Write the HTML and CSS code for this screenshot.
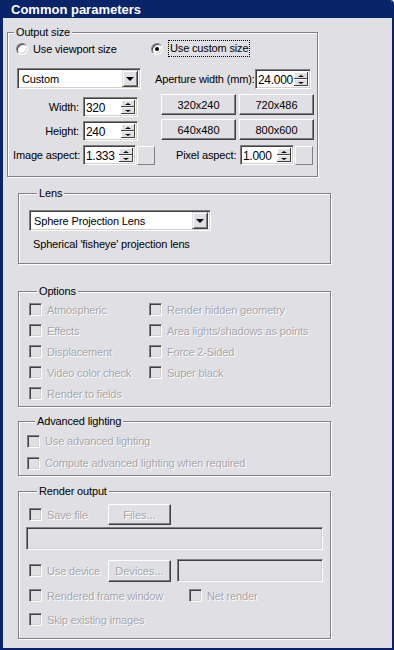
FILE: index.html
```html
<!DOCTYPE html>
<html lang="en">
<head>
    <meta charset="UTF-8">
    <title>Common parameters</title>
    <link rel="stylesheet" href="styles.css">
</head>
<body>
    <div class="window">
        <div class="titlebar">Common parameters</div>
        <div class="panel">

            <!-- Output size -->
            <fieldset class="group group-output">
                <legend>Output size</legend>
                <div class="radio-row">
                    <label class="radio"><span class="radio-dot"></span>Use viewport size</label>
                    <label class="radio"><span class="radio-dot is-on"></span><span class="focus">Use custom size</span></label>
                </div>
                <div class="out-body">
                    <div class="out-left">
                        <div class="combo combo-size">
                            <span class="combo-text">Custom</span>
                            <span class="combo-btn"></span>
                        </div>
                        <div class="spin-row">
                            <span class="spin-label">Width:</span>
                            <div class="spin"><span class="spin-value">320</span><span class="spin-arrows"><i class="up"></i><i class="down"></i></span></div>
                        </div>
                        <div class="spin-row">
                            <span class="spin-label">Height:</span>
                            <div class="spin"><span class="spin-value">240</span><span class="spin-arrows"><i class="up"></i><i class="down"></i></span></div>
                        </div>
                        <div class="spin-row">
                            <span class="spin-label">Image aspect:</span>
                            <div class="spin"><span class="spin-value">1.333</span><span class="spin-arrows"><i class="up"></i><i class="down"></i></span></div>
                            <span class="swatch"></span>
                        </div>
                    </div>
                    <div class="out-right">
                        <div class="aperture-row">
                            <span class="aperture-label">Aperture width (mm):</span>
                            <div class="spin spin-aperture"><span class="spin-value">24.000</span><span class="spin-arrows"><i class="up"></i><i class="down"></i></span></div>
                        </div>
                        <div class="preset-grid">
                            <button class="btn">320x240</button>
                            <button class="btn">720x486</button>
                            <button class="btn">640x480</button>
                            <button class="btn">800x600</button>
                        </div>
                        <div class="pixel-row">
                            <span class="pixel-label">Pixel aspect:</span>
                            <div class="spin spin-pixel"><span class="spin-value">1.000</span><span class="spin-arrows"><i class="up"></i><i class="down"></i></span></div>
                            <span class="swatch"></span>
                        </div>
                    </div>
                </div>
            </fieldset>

            <!-- Lens -->
            <fieldset class="group group-lens">
                <legend>Lens</legend>
                <div class="combo combo-lens">
                    <span class="combo-text">Sphere Projection Lens</span>
                    <span class="combo-btn"></span>
                </div>
                <p class="lens-desc">Spherical 'fisheye' projection lens</p>
            </fieldset>

            <!-- Options -->
            <fieldset class="group group-options">
                <legend>Options</legend>
                <div class="options-grid">
                    <label class="check"><span class="box"></span>Atmospheric</label>
                    <label class="check"><span class="box"></span>Render hidden geometry</label>
                    <label class="check"><span class="box"></span>Effects</label>
                    <label class="check"><span class="box"></span>Area lights/shadows as points</label>
                    <label class="check"><span class="box"></span>Displacement</label>
                    <label class="check"><span class="box"></span>Force 2-Sided</label>
                    <label class="check"><span class="box"></span>Video color check</label>
                    <label class="check"><span class="box"></span>Super black</label>
                    <label class="check"><span class="box"></span>Render to fields</label>
                </div>
            </fieldset>

            <!-- Advanced lighting -->
            <fieldset class="group group-lighting">
                <legend>Advanced lighting</legend>
                <label class="check"><span class="box"></span>Use advanced lighting</label>
                <label class="check"><span class="box"></span>Compute advanced lighting when required</label>
            </fieldset>

            <!-- Render output -->
            <fieldset class="group group-render">
                <legend>Render output</legend>
                <div class="render-row">
                    <label class="check check-fixed"><span class="box"></span>Save file</label>
                    <button class="btn btn-small is-disabled">Files...</button>
                </div>
                <div class="field field-path"></div>
                <div class="render-row render-row-device">
                    <label class="check check-fixed"><span class="box"></span>Use device</label>
                    <button class="btn btn-small btn-device is-disabled">Devices...</button>
                    <div class="field field-device"></div>
                </div>
                <div class="render-row render-row-frame">
                    <label class="check check-frame"><span class="box"></span>Rendered frame window</label>
                    <label class="check"><span class="box"></span>Net render</label>
                </div>
                <div class="render-row render-row-skip">
                    <label class="check"><span class="box"></span>Skip existing images</label>
                </div>
            </fieldset>

        </div>
    </div>
</body>
</html>
```

FILE: styles.css
```css
body {
    margin: 0;
    background: #fff;
    font-family: "Liberation Sans", Arial, sans-serif;
    font-size: 11px;
    letter-spacing: -0.15px;
    color: #000;
}
.window {
    box-sizing: border-box;
    width: 394px;
    height: 650px;
    background: #e0dfe3;
    border-left: 3px solid #0a246a;
    border-right: 2px solid #0a246a;
    border-bottom: 2px solid #0a246a;
    border-top-right-radius: 4px;
    overflow: hidden;
}
.titlebar {
    height: 18px;
    line-height: 19px;
    padding-left: 8px;
    background: #0a246a;
    color: #fff;
    font-weight: bold;
    font-size: 13px;
    letter-spacing: 0;
}
.panel {
    padding-top: 8px;
}

/* group boxes, etched look */
.group {
    box-sizing: border-box;
    margin: 0;
    padding: 0;
    border: 1px solid #808080;
    box-shadow: inset 1px 1px 0 #fff, 1px 1px 0 #fff;
    min-inline-size: 0;
}
.group legend {
    margin-left: 8px;
    padding: 0 2px;
    line-height: 13px;
    background: #e0dfe3;
}
.group-output {
    width: 311px;
    margin-left: 4px;
    padding-bottom: 11px;
}
.group-output legend { margin-left: 6px; }
.group-lens,
.group-options,
.group-lighting,
.group-render {
    width: 313px;
    margin-left: 15px;
}
.group-lens { margin-top: 10px; padding: 10px 0 12px 10px; }
.group-options { margin-top: 21px; padding: 1px 0 2px 10px; }
.group-lighting { margin-top: 8px; padding: 2px 0 1px 8px; }
.group-render { margin-top: 9px; padding: 6px 0 8px 10px; }

.is-disabled,
.check {
    color: #a7a6aa;
    text-shadow: 1px 1px 0 #fff;
}

/* radios */
.radio-row {
    display: grid;
    grid-template-columns: 135px auto;
    margin-top: 1px;
    padding-left: 8px;
    height: 17px;
}
.radio {
    display: flex;
    align-items: center;
    gap: 5px;
    white-space: nowrap;
}
.radio-dot {
    box-sizing: border-box;
    position: relative;
    width: 12px;
    height: 12px;
    border-radius: 50%;
    background: #fff;
    border: 1px solid;
    border-color: #808080 #fff #fff #808080;
    box-shadow: inset 1px 1px 0 #404040, inset -1px -1px 0 #d4d0c8;
}
.radio-dot.is-on::after {
    content: "";
    position: absolute;
    left: 3px;
    top: 3px;
    width: 4px;
    height: 4px;
    border-radius: 50%;
    background: #000;
}
.focus {
    border: 1px dotted #000;
    padding: 1px 1px 2px 1px;
}

/* output size body */
.out-body {
    display: flex;
    margin-top: 11px;
    padding-left: 5px;
}
.out-left {
    width: 142px;
}
.out-right {
    flex: 1;
}

/* sunken field */
.combo,
.spin,
.field {
    box-sizing: border-box;
    border: 1px solid;
    border-color: #808080 #fff #fff #808080;
    box-shadow: inset 1px 1px 0 #404040, inset -1px -1px 0 #d4d0c8;
}
.combo {
    display: flex;
    align-items: center;
    height: 21px;
    background: #fff;
    padding: 2px;
}
.combo-text {
    flex: 1;
    padding-left: 2px;
    white-space: nowrap;
}
.combo-btn {
    box-sizing: border-box;
    position: relative;
    width: 16px;
    height: 17px;
    background: #e0dfe3;
    border: 1px solid;
    border-color: #e0dfe3 #404040 #404040 #e0dfe3;
    box-shadow: inset 1px 1px 0 #fff, inset -1px -1px 0 #808080;
}
.combo-btn::after {
    content: "";
    position: absolute;
    left: 3px;
    top: 6px;
    border-left: 4px solid transparent;
    border-right: 4px solid transparent;
    border-top: 4px solid #000;
}
.combo-size {
    width: 124px;
    margin-left: 4px;
}
.combo-lens {
    width: 182px;
}
.lens-desc {
    margin: 7px 0 0 4px;
    line-height: 13px;
}

/* spinners */
.spin-row {
    display: flex;
    align-items: center;
    height: 20px;
    margin-top: 4px;
    white-space: nowrap;
}
.spin-row:nth-child(2) {
    margin-top: 8px;
}
.spin-label {
    width: 66px;
    margin-right: 4px;
    text-align: right;
}
.spin {
    display: flex;
    width: 55px;
    height: 20px;
    padding: 2px 2px 2px 1px;
    background: #fff;
}
.spin-value {
    flex: 1;
    font-size: 12px;
    letter-spacing: -0.3px;
    line-height: 16px;
    padding-left: 1px;
    overflow: hidden;
}
.spin-arrows {
    display: flex;
    flex-direction: column;
    width: 14px;
}
.spin-arrows i {
    box-sizing: border-box;
    position: relative;
    flex: 1;
    background: #e0dfe3;
    border-right: 1px solid #404040;
    border-bottom: 1px solid #404040;
    box-shadow: inset 1px 1px 0 #fff;
}
.spin-arrows i::after {
    content: "";
    position: absolute;
    left: 4px;
    top: 3px;
    border-left: 3px solid transparent;
    border-right: 3px solid transparent;
}
.spin-arrows .up::after { border-bottom: 2px solid #000; }
.spin-arrows .down::after { border-top: 2px solid #000; }
.swatch {
    box-sizing: border-box;
    width: 18px;
    height: 19px;
    margin-left: 1px;
    border: 1px solid;
    border-color: #fff #808080 #808080 #fff;
}

.aperture-row {
    display: flex;
    align-items: center;
    height: 21px;
    white-space: nowrap;
}
.aperture-label {
    width: 100px;
}
.spin-aperture {
    width: 56px;
}
.preset-grid {
    display: grid;
    grid-template-columns: 75px 75px;
    grid-auto-rows: 21px;
    column-gap: 3px;
    row-gap: 4px;
    margin: 5px 0 0 6px;
}
.pixel-row {
    display: flex;
    align-items: center;
    height: 20px;
    margin-top: 5px;
    padding-left: 21px;
    white-space: nowrap;
}
.pixel-label {
    width: 64px;
}
.spin-pixel {
    width: 54px;
}

/* buttons */
.btn {
    box-sizing: border-box;
    margin: 0;
    padding: 0;
    font: inherit;
    color: #000;
    background: #e0dfe3;
    border: 1px solid;
    border-color: #fff #404040 #404040 #fff;
    box-shadow: inset -1px -1px 0 #808080;
}
.btn-small {
    width: 63px;
    height: 21px;
}
.btn.is-disabled {
    color: #a7a6aa;
}

/* checkboxes */
.check {
    display: flex;
    align-items: center;
    gap: 5px;
    height: 21px;
    white-space: nowrap;
}
.box {
    box-sizing: border-box;
    flex: none;
    width: 13px;
    height: 13px;
    background: #e0dfe3;
    border: 1px solid;
    border-color: #808080 #fff #fff #808080;
    box-shadow: inset 1px 1px 0 #404040, inset -1px -1px 0 #d4d0c8;
}
.options-grid {
    display: grid;
    grid-template-columns: 120px auto;
    grid-auto-rows: 21px;
}
.group-lighting .check {
    height: 22px;
}

/* render output */
.render-row {
    display: flex;
    align-items: center;
}
.check-fixed {
    width: 79px;
}
.field {
    height: 23px;
}
.field-path {
    width: 297px;
    margin: 2px 0 0 -3px;
}
.render-row-device {
    margin-top: 9px;
}
.btn-device {
    height: 22px;
}
.field-device {
    width: 146px;
    margin-left: 6px;
}
.render-row-frame {
    margin-top: 3px;
}
.render-row-skip {
    margin-top: 3px;
}
.check-frame {
    width: 160px;
}
```
